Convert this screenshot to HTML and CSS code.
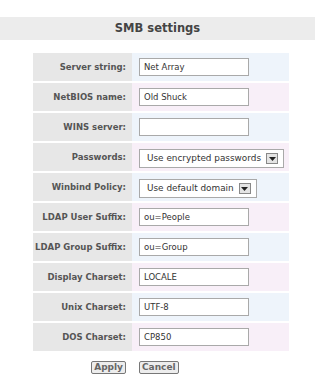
FILE: index.html
```
<!DOCTYPE html>
<html lang="en">
<head>
    <meta charset="UTF-8">
    <title>SMB settings</title>
    <link rel="stylesheet" href="styles.css">
</head>
<body>
    <h1 class="title">SMB settings</h1>

    <form class="settings">
        <table class="grid">
            <tr class="blue">
                <th>Server string:</th>
                <td><input type="text" value="Net Array"></td>
            </tr>
            <tr class="pink">
                <th>NetBIOS name:</th>
                <td><input type="text" value="Old Shuck"></td>
            </tr>
            <tr class="blue">
                <th>WINS server:</th>
                <td><input type="text" value=""></td>
            </tr>
            <tr class="pink">
                <th>Passwords:</th>
                <td>
                    <div class="select">
                        <span class="select-text">Use encrypted passwords</span>
                        <span class="arrow"><svg width="7" height="4" viewBox="0 0 7 4"><path d="M0 0h7L3.5 4z" fill="#222"/></svg></span>
                    </div>
                </td>
            </tr>
            <tr class="blue">
                <th>Winbind Policy:</th>
                <td>
                    <div class="select">
                        <span class="select-text">Use default domain</span>
                        <span class="arrow"><svg width="7" height="4" viewBox="0 0 7 4"><path d="M0 0h7L3.5 4z" fill="#222"/></svg></span>
                    </div>
                </td>
            </tr>
            <tr class="pink">
                <th>LDAP User Suffix:</th>
                <td><input type="text" value="ou=People"></td>
            </tr>
            <tr class="blue">
                <th>LDAP Group Suffix:</th>
                <td><input type="text" value="ou=Group"></td>
            </tr>
            <tr class="pink">
                <th>Display Charset:</th>
                <td><input type="text" value="LOCALE"></td>
            </tr>
            <tr class="blue">
                <th>Unix Charset:</th>
                <td><input type="text" value="UTF-8"></td>
            </tr>
            <tr class="pink">
                <th>DOS Charset:</th>
                <td><input type="text" value="CP850"></td>
            </tr>
        </table>

        <div class="buttons">
            <div class="left"><button type="button">Apply</button></div>
            <div class="right"><button type="button">Cancel</button></div>
        </div>
    </form>
</body>
</html>
```
FILE: styles.css
```
body {
    margin: 0;
    padding-top: 17px;
    font-family: "DejaVu Sans", Verdana, sans-serif;
    color: #555;
    background: #fff;
}
.title {
    margin: 0;
    height: 23px;
    line-height: 23px;
    background-color: #ececec;
    text-align: center;
    font-size: 11.5px;
    font-weight: bold;
    color: #444;
}
.settings {
    margin: 13px 0 0 33px;
    width: 256px;
}
.grid {
    width: 256px;
    border-collapse: separate;
    border-spacing: 0 2px;
    margin-top: -2px;
}
.grid th {
    width: 99px;
    height: 28px;
    padding: 0 6px 0 0;
    box-sizing: border-box;
    background-color: #e7e7e7;
    text-align: right;
    font-size: 8.5px;
    font-weight: bold;
    color: #555;
}
.grid td {
    height: 28px;
    padding: 0 0 0 7px;
}
.blue td {
    background-color: #eef4fb;
}
.pink td {
    background-color: #f8eff8;
}
input[type=text] {
    display: block;
    width: 110px;
    height: 18px;
    box-sizing: border-box;
    margin: 0;
    padding: 0 4px;
    border: 1px solid #a9a9a9;
    background: #fff;
    font-family: "DejaVu Sans", Verdana, sans-serif;
    font-size: 8.5px;
    color: #333;
}
.select {
    display: inline-flex;
    align-items: center;
    height: 19px;
    box-sizing: border-box;
    padding: 0 5px 0 7px;
    border: 1px solid #a9a9a9;
    background: #fff;
    font-size: 8.9px;
    color: #333;
    gap: 5px;
}
.arrow {
    display: flex;
    align-items: flex-end;
    justify-content: center;
    width: 12px;
    height: 11px;
    box-sizing: border-box;
    padding-bottom: 2px;
    border: 1px solid #888;
    background: #e4e4e4;
}
.buttons {
    display: flex;
    margin-top: 8px;
}
.buttons .left {
    width: 93px;
    display: flex;
    justify-content: flex-end;
}
.buttons .right {
    padding-left: 13px;
}
.buttons button {
    display: block;
    height: 13px;
    padding: 0 2px;
    border: 1px solid #777;
    border-radius: 2px;
    background: #ededed;
    font-family: "DejaVu Sans", Verdana, sans-serif;
    font-size: 9px;
    font-weight: bold;
    color: #666;
    line-height: 11px;
}
```
